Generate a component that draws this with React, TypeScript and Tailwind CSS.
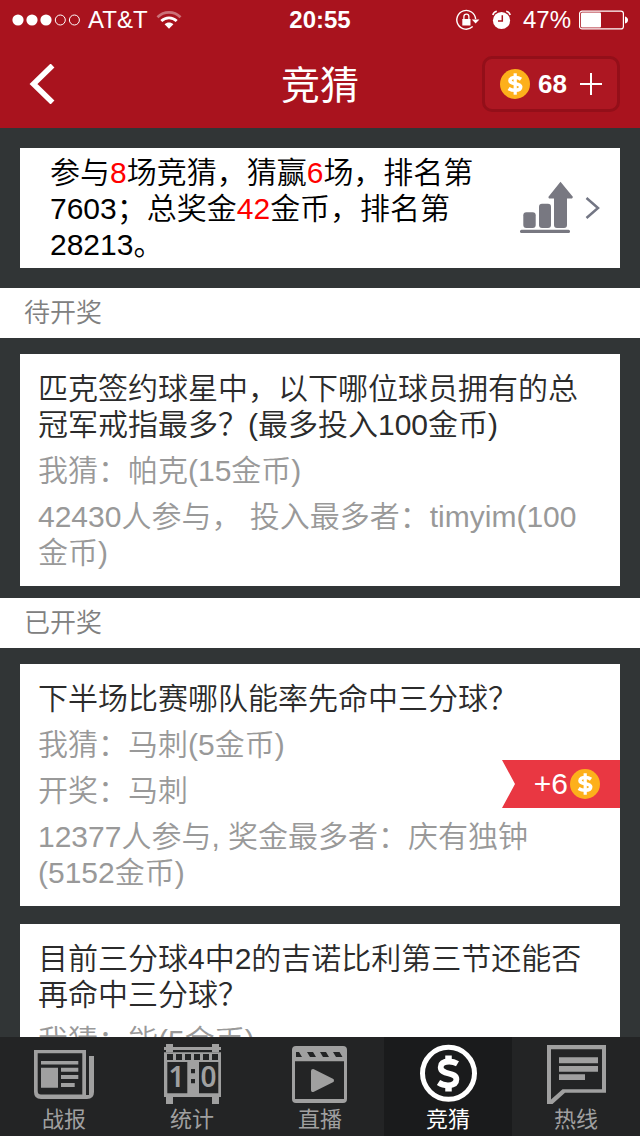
import type { ReactNode } from 'react';

function Coin() {
  return (
    <svg viewBox="0 0 30 30" className="size-[30px] shrink-0" role="img" aria-label="金币">
      <circle cx="15" cy="15" r="15" fill="#fdb01b" />
      <path
        d="M21 10.200C19.200 8.900 17.200 8.500 15.300 8.500C12 8.500 10 9.600 10 11.700C10 16 20.700 13.400 20.700 17.800C20.700 20.200 18.500 21.300 15.200 21.300C12.600 21.300 10.400 20.700 8.600 19.500"
        fill="none"
        stroke="#fff"
        strokeWidth="3.600"
      />
      <path d="M15.200 4.300V25.700" stroke="#fff" strokeWidth="3.200" />
    </svg>
  );
}

function StatusBar() {
  return (
    <div className="grid h-10 grid-cols-[1fr_auto_1fr] items-center px-3 text-2xl text-white">
      <div className="flex items-center gap-2">
        <svg viewBox="0 0 68 12" className="h-3 w-[68px]" aria-hidden="true">
          <g fill="#fff">
            <circle cx="6" cy="6" r="5.6" />
            <circle cx="20" cy="6" r="5.6" />
            <circle cx="34" cy="6" r="5.6" />
          </g>
          <g fill="none" stroke="#fff">
            <circle cx="48.3" cy="6" r="5" />
            <circle cx="62.4" cy="6" r="5" />
          </g>
        </svg>
        <span>AT&amp;T</span>
        <svg viewBox="0 0 26 20" className="h-5 w-[26px]" aria-hidden="true">
          <g fill="none" stroke="#fff" strokeWidth="2.8">
            <path d="M1.5 7.2C8 .8 18 .8 24.500 7.200" opacity=".4" />
            <path d="M5.300 11C9.700 6.800 16.300 6.800 20.700 11" />
          </g>
          <path d="M8.600 14.300C11.200 11.900 14.800 11.900 17.400 14.300L13 18.800Z" fill="#fff" />
        </svg>
      </div>
      <time className="font-bold">20:55</time>
      <div className="flex items-center justify-end gap-2">
        <svg viewBox="0 0 60 24" className="h-6 w-[60px]" aria-hidden="true">
          <path d="M17.700 18.600A9.400 9.400 0 1 1 20.600 11" fill="none" stroke="#fff" strokeWidth="1.400" />
          <path d="M16.800 11.500H24.400L20.600 15.500Z" fill="#fff" />
          <rect x="7.300" y="11" width="8.200" height="6.500" fill="#fff" />
          <path d="M8.900 11V8.700A2.500 2.500 0 0 1 13.900 8.700V11" fill="none" stroke="#fff" strokeWidth="1.300" />
          <circle cx="46.500" cy="12.500" r="8.600" fill="#fff" />
          <path d="M47.300 7.200V13H43" fill="none" stroke="#a9131e" strokeWidth="1.500" />
          <path d="M37.800 7A5 5 0 0 1 41.800 3.300M51.200 3.300A5 5 0 0 1 55.200 7" fill="none" stroke="#fff" strokeWidth="1.600" />
        </svg>
        <span>47%</span>
        <svg viewBox="0 0 49 20" className="h-5 w-[49px]" aria-hidden="true">
          <rect x=".600" y="1.100" width="43.800" height="17.800" rx="2.500" fill="none" stroke="#fff" strokeWidth="1.200" />
          <rect x="2" y="2.500" width="20" height="15" rx="1" fill="#fff" />
          <path d="M46 6.500Q49 7.500 49 10T46 13.500Z" fill="#fff" />
        </svg>
      </div>
    </div>
  );
}

function NavBar() {
  return (
    <div className="grid h-22 grid-cols-[1fr_auto_1fr] items-center px-5 text-white">
      <button type="button" aria-label="返回" className="w-12 justify-self-start pl-2">
        <svg viewBox="0 0 28 40" className="h-10 w-7" aria-hidden="true">
          <path d="M24.500 1.500L5.500 20L24.500 38.500" fill="none" stroke="#fff" strokeWidth="5.500" />
        </svg>
      </button>
      <h1 className="pt-1 text-[39px] leading-[56px] font-normal">竞猜</h1>
      <button
        type="button"
        className="flex h-14 w-[138px] items-center gap-2 justify-self-end rounded-[10px] border-3 border-[#930f19] bg-[#ad1722] pl-[15px]"
      >
        <Coin />
        <span className="text-[26px] font-bold">68</span>
        <svg viewBox="0 0 24 24" className="ml-1 size-6" aria-label="充值" role="img">
          <path d="M1 12H23M12 1V23" stroke="#fff" strokeWidth="2" />
        </svg>
      </button>
    </div>
  );
}

function SectionTitle({ children }: { children: ReactNode }) {
  return (
    <h2 className="bg-white px-6 text-[26px] leading-[50px] font-[350] text-[#808080]">{children}</h2>
  );
}

type Quiz = { title: string; lines: string[]; reward?: string };

function QuizCard({ title, lines, reward }: Quiz) {
  return (
    <article className="relative flex flex-col gap-2.5 bg-white px-[18px] pt-[17px] pb-[15px] text-[30px] leading-9 font-[350] text-[#999]">
      <h3 className="text-[#2b2b2b]">{title}</h3>
      {lines.map((line) => (
        <p key={line}>{line}</p>
      ))}
      {reward && (
        <div className="absolute top-24 right-0 flex h-12 w-[118px] items-center justify-end gap-0.5 bg-[#e93742] pr-5 text-white [clip-path:polygon(0_0,100%_0,100%_100%,0_100%,13px_50%)]">
          <span>{reward}</span>
          <Coin />
        </div>
      )}
    </article>
  );
}

const pending: Quiz[] = [
  {
    title: '匹克签约球星中，以下哪位球员拥有的总冠军戒指最多？(最多投入100金币)',
    lines: ['我猜：帕克(15金币)', '42430人参与， 投入最多者：timyim(100金币)'],
  },
];

const finished: Quiz[] = [
  {
    title: '下半场比赛哪队能率先命中三分球？',
    lines: ['我猜：马刺(5金币)', '开奖：马刺', '12377人参与, 奖金最多者：庆有独钟(5152金币)'],
    reward: '+6',
  },
  {
    title: '目前三分球4中2的吉诺比利第三节还能否再命中三分球？',
    lines: ['我猜：能(5金币)'],
  },
];

function Summary() {
  return (
    <a href="#rank" className="mx-5 my-5 flex items-center bg-white pr-5 pl-[30px]">
      <p className="min-w-0 flex-1 pt-[7px] pr-3 pb-[5px] text-[30px] leading-9 font-[350] text-black">
        参与<span className="text-[#f00]">8</span>场竞猜，猜赢<span className="text-[#f00]">6</span>
        场，排名第7603；总奖金<span className="text-[#f00]">42</span>金币，排名第28213。
      </p>
      <svg viewBox="0 0 54 54" className="size-[54px] shrink-0" aria-hidden="true" fill="#787881">
        <rect x="3.300" y="31.300" width="12.400" height="15.700" rx="3" />
        <rect x="19" y="22.700" width="12" height="24.300" rx="3" />
        <path d="M40.500 .700L53 16L52 17.500H47V44Q47 47 44 47H37Q34 47 34 44V17.500H29L28.300 16Z" />
        <rect x="0" y="48.700" width="50" height="3.300" rx="1.500" />
      </svg>
      <svg viewBox="0 0 16 24" className="ml-2.5 h-6 w-4 shrink-0" aria-hidden="true">
        <path d="M2.500 2L14 12L2.500 22" fill="none" stroke="#737684" strokeWidth="2.500" />
      </svg>
    </a>
  );
}

const tabs: { label: string; icon: ReactNode; active?: boolean }[] = [
  {
    label: '战报',
    icon: (
      <>
        <path
          fillRule="evenodd"
          d="M2 10H54V55H57V16H62V52Q62 59 55 59H9Q2 59 2 52ZM5.700 13.300V51Q5.700 54.500 9 54.500H50.300V13.300Z"
        />
        <path d="M9 21H46.300V24.500H9ZM9 27.700H26V47.700H9ZM29 27.700H46.300V31.700H29ZM29 35H46.300V39H29ZM29 43H42.700V47H29Z" />
      </>
    ),
  },
  {
    label: '统计',
    icon: (
      <>
        <path d="M6 4H13V7H52V4H59V7H61V10H59V12.300H52V10H13V12.300H6V10H4V7H6ZM6 57H13V64H6ZM52 57H59V64H52Z" />
        <path
          fillRule="evenodd"
          d="M4 12.300H61V57H4ZM7 14V20H13V14ZM16 14V20H22V14ZM25 14V20H31V14ZM34 14V20H40V14ZM43 14V20H49V14ZM52 14V20H58V14ZM7.300 22V53.300H27.300V22ZM39 22V53.300H58.300V22ZM31 29V33.300H35V29ZM31 39V43.300H35V39Z"
        />
        <g fontFamily="'Noto Sans', sans-serif" fontWeight="600" fontSize="28" textAnchor="middle">
          <text x="16.500" y="47">1</text>
          <text x="48.500" y="47">0</text>
        </g>
      </>
    ),
  },
  {
    label: '直播',
    icon: (
      <>
        <path
          fillRule="evenodd"
          d="M8 6H55Q59 6 59 10V59Q59 63 55 63H8Q4 63 4 59V10Q4 6 8 6ZM8 12V17H14L11 12ZM19 12L22 17H28L25 12ZM32 12L35 17H41L38 12ZM45 12L48 17H54.500L51.500 12ZM7 21.300V59H56V21.300Z"
        />
        <path d="M25 31L44 40.500L25 50Z" stroke="#a0a0a0" strokeWidth="4" strokeLinejoin="round" />
      </>
    ),
  },
  {
    label: '竞猜',
    active: true,
    icon: (
      <>
        <circle cx="32.500" cy="33.300" r="26" fill="none" stroke="#fff" strokeWidth="5" />
        <path
          d="M41.500 23.700C39 22.200 36.200 21.500 33.200 21.500C27.500 21.500 24.700 23.700 24.700 27.200C24.700 35.500 40.400 31.500 40.400 39.300C40.400 43.500 37.200 45.300 32 45.300C28.500 45.300 25.200 44.300 22.500 42.500"
          fill="none"
          stroke="#fff"
          strokeWidth="5.800"
        />
        <path d="M32.500 15.500V22M32.500 45V51.500" stroke="#fff" strokeWidth="6.500" />
      </>
    ),
  },
  {
    label: '热线',
    icon: (
      <>
        <path fillRule="evenodd" d="M3 5H62V52.700H21L8.500 64H3ZM7 9.300V59.500L18.500 49.300H58V9.300Z" />
        <path d="M15 17.300H54V23.300H15ZM15 26H54V31.700H15ZM15 34.300H41V40H15Z" />
      </>
    ),
  },
];

function TabBar() {
  return (
    <nav className="grid shrink-0 grid-cols-5 bg-[#232425]">
      {tabs.map(({ label, icon, active }) => (
        <a
          key={label}
          href={'#' + label}
          aria-current={active ? 'page' : undefined}
          className={
            active
              ? 'flex flex-col items-center bg-[#1a1b1c] pt-[3px] text-white'
              : 'flex flex-col items-center pt-[3px] text-[#a0a0a0]'
          }
        >
          <svg viewBox="0 0 64 64" className="size-16" fill="currentColor" aria-hidden="true">
            {icon}
          </svg>
          <span className="text-[22px] leading-8">{label}</span>
        </a>
      ))}
    </nav>
  );
}

export default function App() {
  return (
    <div
      lang="zh-CN"
      className="flex h-screen flex-col bg-[#313536] font-['Liberation_Sans','Noto_Sans_CJK_SC',sans-serif]"
    >
      <header className="shrink-0 bg-[#a9131e]">
        <StatusBar />
        <NavBar />
      </header>
      <main className="min-h-0 flex-1 overflow-y-auto [scrollbar-width:none]">
        <Summary />
        <section>
          <SectionTitle>待开奖</SectionTitle>
          <div className="flex flex-col gap-[18px] px-5 pt-4 pb-3">
            {pending.map((quiz) => (
              <QuizCard key={quiz.title} {...quiz} />
            ))}
          </div>
        </section>
        <section>
          <SectionTitle>已开奖</SectionTitle>
          <div className="flex flex-col gap-[18px] px-5 pt-4 pb-3">
            {finished.map((quiz) => (
              <QuizCard key={quiz.title} {...quiz} />
            ))}
          </div>
        </section>
      </main>
      <TabBar />
    </div>
  );
}
